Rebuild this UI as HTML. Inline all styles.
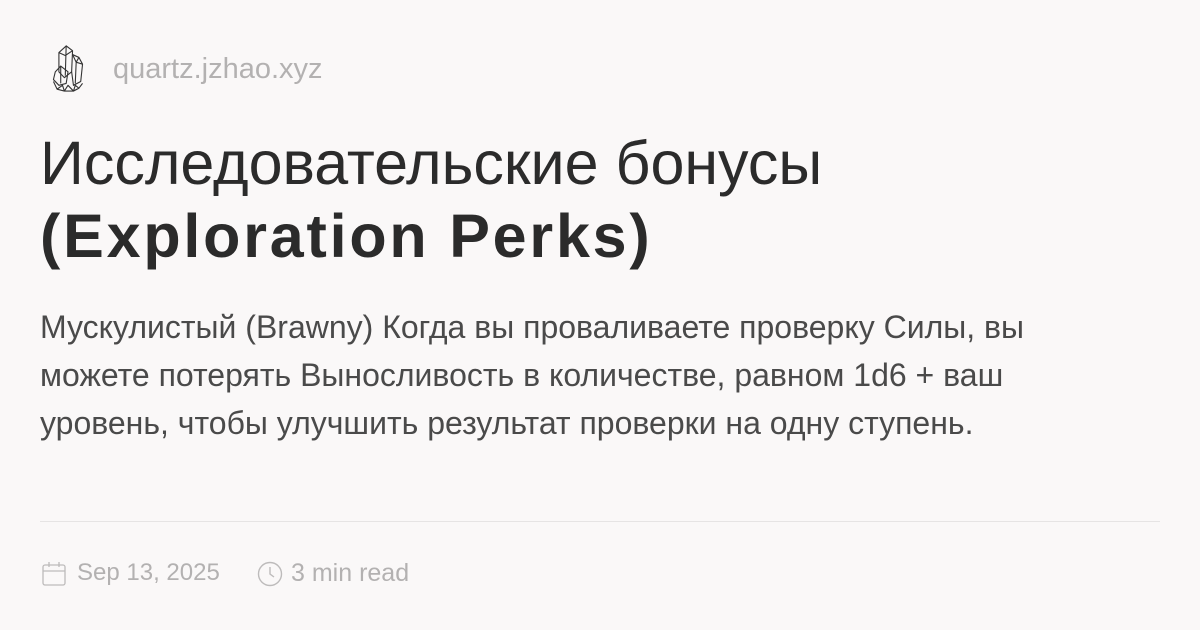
<!DOCTYPE html>
<html><head><meta charset="utf-8"><style>
html,body{margin:0;padding:0;}
body{width:1200px;height:630px;background:#faf8f8;font-family:"Liberation Sans",sans-serif;position:relative;overflow:hidden;color:#2b2b2b;}
.abs{position:absolute;white-space:nowrap;}
</style></head><body>
<svg class="abs" style="left:48px;top:43px" width="40" height="50" viewBox="0 0 44 52" fill="none" stroke="#333" stroke-width="1.2" stroke-linejoin="round" preserveAspectRatio="none">
<path d="M12 10 L20 3 L27 8 L26 30 L18 36 L12 30 Z"/>
<path d="M20 3 L19 34 M12 10 L19 13 L27 8"/>
<path d="M27 12 L34 15 L38 22 L36 40 L28 44 L26 30"/>
<path d="M34 15 L31 20 L30 42 M27 12 L31 20 L38 22"/>
<path d="M8 30 L14 24 L22 30 L20 42 L12 44 L6 38 Z M14 24 L14 42"/>
<path d="M6 40 L10 48 L18 50 L28 50 L34 47 L38 42 M10 48 L16 44 L18 50 L22 44 L28 50 L30 44 L34 47"/>
</svg>
<div class="abs" style="left:113px;top:53px;font-size:29px;color:#b3b1b1;">quartz.jzhao.xyz</div>
<div class="abs" style="left:40px;top:127px;font-size:61px;line-height:73px;color:#2b2b2b;">Исследовательские бонусы<br><b style="letter-spacing:2.8px">(Exploration Perks)</b></div>
<div class="abs" style="left:40px;top:303px;font-size:32px;line-height:48px;color:#4a4a4a;">Мускулистый (Brawny) Когда вы проваливаете проверку Силы, вы<br>можете потерять Выносливость в количестве, равном 1d6 + ваш<br>уровень, чтобы улучшить результат проверки на одну ступень.</div>
<div class="abs" style="left:40px;top:521px;width:1120px;height:1px;background:#e6e4e4;"></div>
<svg class="abs" style="left:42px;top:561px" width="24" height="26" viewBox="0 0 24 26" fill="none" stroke="#bdbbbb" stroke-width="1.3"><rect x="1" y="4" width="22" height="20" rx="2"/><path d="M1 10 H23 M7 1 V6 M17 1 V6"/></svg>
<div class="abs" style="left:77px;top:559px;font-size:24px;color:#b3b1b1;">Sep 13, 2025</div>
<svg class="abs" style="left:257px;top:561px" width="26" height="26" viewBox="0 0 26 26" fill="none" stroke="#bdbbbb" stroke-width="1.4"><circle cx="13" cy="13" r="11.5"/><path d="M13 6 V13 L17 16"/></svg>
<div class="abs" style="left:291px;top:559px;font-size:25px;color:#b3b1b1;">3 min read</div>
</body></html>
